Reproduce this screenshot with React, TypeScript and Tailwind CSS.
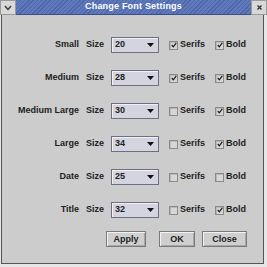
import React from 'react';

type Row = { name: string; size: string; serifs: boolean; bold: boolean };

const rows: Row[] = [
  { name: 'Small', size: '20', serifs: true, bold: true },
  { name: 'Medium', size: '28', serifs: true, bold: true },
  { name: 'Medium Large', size: '30', serifs: false, bold: true },
  { name: 'Large', size: '34', serifs: false, bold: true },
  { name: 'Date', size: '25', serifs: false, bold: false },
  { name: 'Title', size: '32', serifs: false, bold: true },
];

const Check: React.FC<{ checked: boolean }> = ({ checked }) => (
  <div className="w-[9px] h-[9px] border border-[#8a8a8a] bg-[#d6d6d6] shadow-[inset_1px_1px_0_#b8b8b8] flex items-center justify-center">
    {checked && (
      <svg width="6" height="6" viewBox="0 0 6 6">
        <path d="M0.8 3 L2.3 4.8 L5.3 0.8" stroke="#1a1a1a" strokeWidth="1.2" fill="none" />
      </svg>
    )}
  </div>
);

const Button: React.FC<{ label: string; w: string }> = ({ label, w }) => (
  <button
    className={`${w} h-[16px] border border-[#7a7a7a] bg-[#cfcfcf] shadow-[inset_1px_1px_0_#f2f2f2,inset_-1px_-1px_0_#a8a8a8] text-[9px] font-bold text-[#222] leading-none`}
  >
    {label}
  </button>
);

const App: React.FC = () => {
  return (
    <div
      className="w-[267px] h-[267px] bg-[#e6e6e6] overflow-hidden text-[#222]"
      style={{ fontFamily: '"Liberation Sans", Arial, sans-serif' }}
    >
      <div className="flex h-[15px]">
        <div className="w-[16px] h-[15px] bg-[#d8d8d8] border border-[#9a9a9a] flex items-center justify-center">
          <svg width="8" height="6" viewBox="0 0 8 6">
            <path d="M1 1 L4 4.5 L7 1" stroke="#333" strokeWidth="1.3" fill="none" />
          </svg>
        </div>
        <div className="flex-1 bg-[repeating-linear-gradient(135deg,#4d67ab_0px,#4d67ab_1px,#6079bb_1px,#6079bb_3px)] flex items-center justify-center border-b border-[#3a4f88]">
          <span className="text-white text-[9px] font-bold tracking-[0.2px]">Change Font Settings</span>
        </div>
        <div className="w-[16px] h-[15px] bg-[#d8d8d8] border border-[#9a9a9a] flex items-center justify-center">
          <svg width="7" height="7" viewBox="0 0 7 7">
            <path d="M1.5 1.5 L5.5 5.5 M5.5 1.5 L1.5 5.5" stroke="#333" strokeWidth="1.4" fill="none" />
          </svg>
        </div>
      </div>
      <div className="ml-[1px] w-[263px] h-[249px] bg-[#cccccc] border-l border-r border-b border-[#555] pt-[22px]">
        <div className="flex flex-col gap-[17px]">
          {rows.map((r) => (
            <div key={r.name} className="flex items-center h-[16px] text-[9px] font-bold">
              <div className="w-[77px] text-right">{r.name}</div>
              <div className="ml-[7px] w-[17px]">Size</div>
              <div className="ml-[8px] w-[48px] h-[16px] border border-[#6e6e86] bg-[#d4d4de] shadow-[inset_1px_1px_0_#f0f0f5] flex items-center justify-between pl-[3px] pr-[4px]">
                <span>{r.size}</span>
                <svg width="7" height="4" viewBox="0 0 7 4">
                  <path d="M0 0 H7 L3.5 4 Z" fill="#111" />
                </svg>
              </div>
              <div className="ml-[10px] flex items-center gap-[2px] w-[46px]">
                <Check checked={r.serifs} />
                <span>Serifs</span>
              </div>
              <div className="flex items-center gap-[2px]">
                <Check checked={r.bold} />
                <span>Bold</span>
              </div>
            </div>
          ))}
        </div>
        <div className="flex mt-[13px] ml-[104px] gap-[13px]">
          <Button label="Apply" w="w-[40px]" />
          <div className="flex gap-[7px]">
            <Button label="OK" w="w-[36px]" />
            <Button label="Close" w="w-[45px]" />
          </div>
        </div>
      </div>
    </div>
  );
};

export default App;
